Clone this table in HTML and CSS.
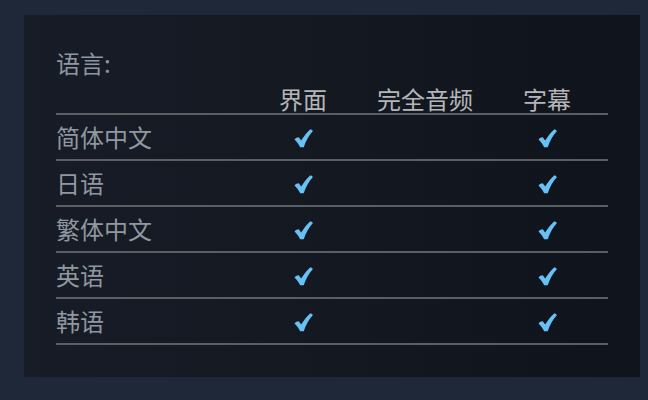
FILE: index.html
```html
<!DOCTYPE html>
<html lang="zh">
<head>
<meta charset="utf-8">
<link rel="stylesheet" href="styles.css">
</head>
<body>
<div class="panel">
  <div class="title">语言:</div>
  <div class="grid">
    <div class="cell head"></div>
    <div class="cell head c">界面</div>
    <div class="cell head c">完全音频</div>
    <div class="cell head c">字幕</div>

    <div class="cell label">简体中文</div>
    <div class="cell c"><svg class="chk" viewBox="0 0 18 18"><path d="M0.5 10 C1.5 8.5 3 7.8 4.5 7.8 L6.8 11 C9.3 6.8 12.2 3 15 0.6 C16.3 0.4 17.5 1 17.8 2.2 C14.2 6.2 11.4 11 9.2 17.2 L5.8 17.2 C4.4 14.6 2.6 12 0.5 10 Z"/></svg></div>
    <div class="cell c"></div>
    <div class="cell c"><svg class="chk" viewBox="0 0 18 18"><path d="M0.5 10 C1.5 8.5 3 7.8 4.5 7.8 L6.8 11 C9.3 6.8 12.2 3 15 0.6 C16.3 0.4 17.5 1 17.8 2.2 C14.2 6.2 11.4 11 9.2 17.2 L5.8 17.2 C4.4 14.6 2.6 12 0.5 10 Z"/></svg></div>

    <div class="cell label">日语</div>
    <div class="cell c"><svg class="chk" viewBox="0 0 18 18"><path d="M0.5 10 C1.5 8.5 3 7.8 4.5 7.8 L6.8 11 C9.3 6.8 12.2 3 15 0.6 C16.3 0.4 17.5 1 17.8 2.2 C14.2 6.2 11.4 11 9.2 17.2 L5.8 17.2 C4.4 14.6 2.6 12 0.5 10 Z"/></svg></div>
    <div class="cell c"></div>
    <div class="cell c"><svg class="chk" viewBox="0 0 18 18"><path d="M0.5 10 C1.5 8.5 3 7.8 4.5 7.8 L6.8 11 C9.3 6.8 12.2 3 15 0.6 C16.3 0.4 17.5 1 17.8 2.2 C14.2 6.2 11.4 11 9.2 17.2 L5.8 17.2 C4.4 14.6 2.6 12 0.5 10 Z"/></svg></div>

    <div class="cell label">繁体中文</div>
    <div class="cell c"><svg class="chk" viewBox="0 0 18 18"><path d="M0.5 10 C1.5 8.5 3 7.8 4.5 7.8 L6.8 11 C9.3 6.8 12.2 3 15 0.6 C16.3 0.4 17.5 1 17.8 2.2 C14.2 6.2 11.4 11 9.2 17.2 L5.8 17.2 C4.4 14.6 2.6 12 0.5 10 Z"/></svg></div>
    <div class="cell c"></div>
    <div class="cell c"><svg class="chk" viewBox="0 0 18 18"><path d="M0.5 10 C1.5 8.5 3 7.8 4.5 7.8 L6.8 11 C9.3 6.8 12.2 3 15 0.6 C16.3 0.4 17.5 1 17.8 2.2 C14.2 6.2 11.4 11 9.2 17.2 L5.8 17.2 C4.4 14.6 2.6 12 0.5 10 Z"/></svg></div>

    <div class="cell label">英语</div>
    <div class="cell c"><svg class="chk" viewBox="0 0 18 18"><path d="M0.5 10 C1.5 8.5 3 7.8 4.5 7.8 L6.8 11 C9.3 6.8 12.2 3 15 0.6 C16.3 0.4 17.5 1 17.8 2.2 C14.2 6.2 11.4 11 9.2 17.2 L5.8 17.2 C4.4 14.6 2.6 12 0.5 10 Z"/></svg></div>
    <div class="cell c"></div>
    <div class="cell c"><svg class="chk" viewBox="0 0 18 18"><path d="M0.5 10 C1.5 8.5 3 7.8 4.5 7.8 L6.8 11 C9.3 6.8 12.2 3 15 0.6 C16.3 0.4 17.5 1 17.8 2.2 C14.2 6.2 11.4 11 9.2 17.2 L5.8 17.2 C4.4 14.6 2.6 12 0.5 10 Z"/></svg></div>

    <div class="cell label">韩语</div>
    <div class="cell c"><svg class="chk" viewBox="0 0 18 18"><path d="M0.5 10 C1.5 8.5 3 7.8 4.5 7.8 L6.8 11 C9.3 6.8 12.2 3 15 0.6 C16.3 0.4 17.5 1 17.8 2.2 C14.2 6.2 11.4 11 9.2 17.2 L5.8 17.2 C4.4 14.6 2.6 12 0.5 10 Z"/></svg></div>
    <div class="cell c"></div>
    <div class="cell c"><svg class="chk" viewBox="0 0 18 18"><path d="M0.5 10 C1.5 8.5 3 7.8 4.5 7.8 L6.8 11 C9.3 6.8 12.2 3 15 0.6 C16.3 0.4 17.5 1 17.8 2.2 C14.2 6.2 11.4 11 9.2 17.2 L5.8 17.2 C4.4 14.6 2.6 12 0.5 10 Z"/></svg></div>
  </div>
</div>
</body>
</html>
```

FILE: styles.css
```css
html, body {
  margin: 0;
  padding: 0;
  background: #1f2838;
}
body {
  padding: 15px 8px 23px 24px;
  font-family: "Noto Sans CJK SC", "Noto Sans", sans-serif;
}
.panel {
  width: 552px;
  height: 296px;
  padding: 34px 32px 32px 32px;
  background: linear-gradient(to right, #171c26, #0f141c);
}
.title {
  font-size: 24px;
  line-height: 28px;
  height: 28px;
  color: #8f98a0;
  margin-bottom: 8px;
}
.grid {
  display: grid;
  grid-template-columns: 186px 122px 122px 122px;
}
.cell {
  height: 44px;
  border-bottom: 2px solid #5b5e62;
  display: flex;
  align-items: center;
  font-size: 24px;
  line-height: 28px;
  color: #8f98a0;
}
.cell.head {
  height: 28px;
  align-items: flex-end;
  color: #b4b6b8;
}
.cell.c {
  justify-content: center;
}
.chk {
  width: 19px;
  height: 19px;
  fill: #67c1f5;
  margin-top: 2px;
}
```
